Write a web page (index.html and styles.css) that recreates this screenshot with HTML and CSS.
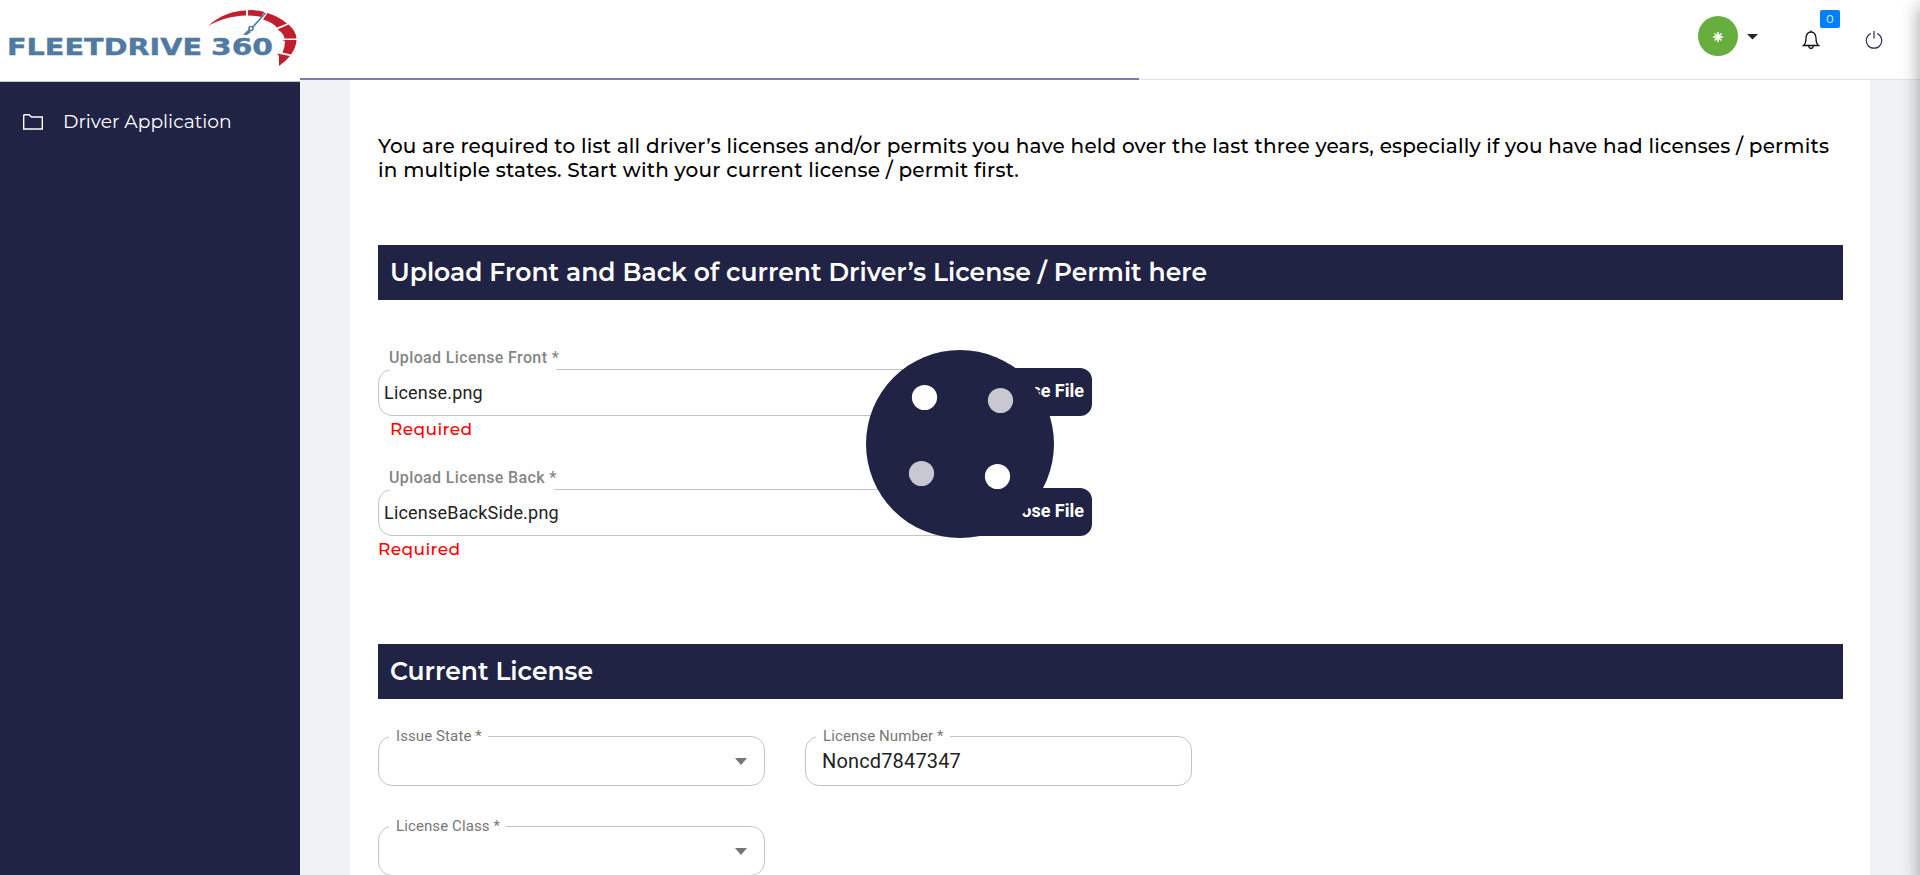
FILE: index.html
```html
<!DOCTYPE html>
<html lang="en">
<head>
<meta charset="utf-8">
<title>FleetDrive 360 - Driver Application</title>
<link rel="stylesheet" href="styles.css">
</head>
<body>
<div class="app">
  <header class="header">
    <svg class="logo" width="300" height="81" viewBox="0 0 300 81">
      <text class="logo-text" x="7" y="54.500" textLength="195" lengthAdjust="spacingAndGlyphs">FLEETDRIVE</text>
      <text class="logo-text" x="211" y="54.500" textLength="62" lengthAdjust="spacingAndGlyphs">360</text>
      <path fill="#c11f2e" d="M208 26C220 15 234 10.500 246 10.500V15.500C232 16 219 19.500 208 26Z"/>
      <path fill="#c11f2e" d="M248 10.200Q257 9.700 264.500 12L261 17Q255 15.500 248 15.500Z"/>
      <path fill="#c11f2e" d="M267.500 13Q279 16.500 287 23.500L277 27.500Q272 22 263 19.500Z"/>
      <path fill="#c11f2e" d="M288.500 24.500Q296 31 296.500 38.500H284.500Q284 33.500 277.500 29.500Z"/>
      <path fill="#c11f2e" d="M296.500 40Q296 48 291 54.500L282.500 52.500Q285 47 285 41L282 40Z"/>
      <path fill="#c11f2e" d="M290 56Q286 61 279 66V56L277 53.500Z"/>
      <path fill="none" stroke="#517aa3" stroke-width="1.600" d="M265.500 13L252 28"/>
      <path fill="#517aa3" d="M243 34.800L248.500 29.500L251 32L247 35Z"/>
      <circle cx="251" cy="28.500" r="2" fill="#fff" stroke="#517aa3" stroke-width="1.600"/>
    </svg>
    <div class="tools">
      <span class="avatar"><svg width="10" height="10" viewBox="-5 -5 10 10"><path stroke="#fff" stroke-width="1.500" d="M0-5V5M-5 0H5M-3.500-3.500L3.500 3.500M3.500-3.500L-3.500 3.500"/><circle r="2.500" fill="#fff"/></svg></span>
      <svg class="caret" width="11" height="6" viewBox="0 0 11 6"><path d="M0 0H11L5.500 5.500Z" fill="#212529"/></svg>
      <span class="bell">
        <svg width="18" height="20" viewBox="0 0 18 20" fill="none" stroke="#111" stroke-width="1.300"><path d="M1.500 15.500H16.500Q14 13.500 14 8Q13.500 2 9 2Q4.500 2 4 8Q4 13.500 1.500 15.500ZM6.500 15.500Q7 18.500 9 18.500Q11 18.500 11.500 15.500M9 .5V2"/></svg>
        <span class="badge">0</span>
      </span>
      <svg class="power" width="18" height="20" viewBox="0 0 18 20" fill="none" stroke="#2b2c63" stroke-width="1.200"><path d="M5.800 3.500A7.700 7.700 0 1 0 12.200 3.500M9 1V8.500"/></svg>
    </div>
  </header>
  <div class="progress"></div>
  <div class="body">
    <nav class="sidebar">
      <a class="nav-item"><svg width="20" height="16" viewBox="0 0 20 16" fill="none" stroke="#fff" stroke-width="1.400"><path d="M.7 1.500Q.7.700 1.500.700H6L8.500 3H19.300V15H.7Z"/></svg><span class="nav-text">Driver Application</span></a>
    </nav>
    <main class="main">
      <section class="card">
        <p class="intro">You are required to list all driver’s licenses and/or permits you have held over the last three years, especially if you have had licenses / permits<br>in multiple states. Start with your current license / permit first.</p>
        <h2 class="bar">Upload Front and Back of current Driver’s License / Permit here</h2>
        <div class="uploads">
          <div class="upload">
            <label class="upload-label">Upload License Front *</label>
            <div class="file"><i class="notch"></i><span class="file-name">License.png</span><button class="choose">Choose File</button></div>
            <span class="required indent">Required</span>
          </div>
          <div class="upload">
            <label class="upload-label">Upload License Back *</label>
            <div class="file"><i class="notch notch-back"></i><span class="file-name">LicenseBackSide.png</span><button class="choose">Choose File</button></div>
            <span class="required">Required</span>
          </div>
        </div>
        <h2 class="bar">Current License</h2>
        <div class="fields">
          <div class="field"><span class="label">Issue State *</span><i class="arrow"></i></div>
          <div class="field"><span class="label">License Number *</span><span class="value">Noncd7847347</span></div>
          <div class="field"><span class="label">License Class *</span><i class="arrow"></i></div>
        </div>
      </section>
    </main>
  </div>
  <div class="drawer-edge"></div>
  <svg class="loader" width="188" height="188" viewBox="0 0 188 188"><circle cx="94" cy="94" r="94" fill="#212344"/><circle cx="58.500" cy="47.500" r="12.600" fill="#fff"/><circle cx="134.500" cy="50.500" r="12.600" fill="#c8c8d0"/><circle cx="55.500" cy="123.500" r="12.600" fill="#c8c8d0"/><circle cx="131.500" cy="126.500" r="12.600" fill="#fff"/></svg>
</div>
</body>
</html>
```
FILE: styles.css
```css
* { box-sizing: border-box; }
body { margin: 0; overflow: hidden; font-family: Montserrat, Inter, sans-serif; }
.app { position: relative; width: 1920px; height: 875px; overflow: hidden; display: flex; flex-direction: column; background: #fff; }
.header { height: 78px; flex: none; display: flex; justify-content: space-between; }
.logo { flex: none; overflow: visible; }
.logo-text { font: 700 23px "DejaVu Sans", sans-serif; fill: #517aa3; stroke: #517aa3; stroke-width: 0.4px; }
.tools { display: flex; align-items: flex-start; padding: 16px 37px 0 0; }
.avatar { width: 40px; height: 40px; border-radius: 50%; background: #68ae3f; display: flex; align-items: center; justify-content: center; padding-top: 2px; }
.caret { margin: 18px 44px 0 9px; }
.bell { position: relative; width: 18px; margin-top: 14px; }
.badge { position: absolute; left: 18px; top: -20px; width: 20px; height: 18px; border-radius: 2px; background: #0080ff; color: #fff; font-size: 11px; line-height: 18px; text-align: center; }
.power { margin: 14px 0 0 45px; }
.progress { height: 2px; flex: none; margin-left: 300px; background: linear-gradient(#7b7aae, #7b7aae) 0 0 / 839px 2px no-repeat, linear-gradient(#dee2e6, #dee2e6) 0 1px / 100% 1px no-repeat; }
.body { flex: 1; display: flex; min-height: 0; }
.sidebar { width: 300px; margin-top: 1px; flex: none; background: #212344; border-top: 1px solid #c6c7d2; padding: 31px 23px; }
.nav-item { display: flex; align-items: center; gap: 20px; color: #fff; height: 17px; }
.nav-text { font-size: 18.7px; line-height: 20px; white-space: nowrap; margin-top: 1px; }
.main { flex: 1; background: #eff3f6; padding: 0 50px; }
.card { width: 1520px; height: 100%; background: #fff; padding: 54px 27px 0 28px; }
.intro { margin: 0; height: 111px; font-size: 20px; line-height: 24px; font-weight: 500; color: #000; white-space: nowrap; letter-spacing: 0.19px; }
.bar { margin: 0; height: 55px; padding: 0 12px; background: #212344; color: #fff; font-size: 25px; line-height: 55px; font-weight: 600; white-space: nowrap; }
.uploads { height: 344px; padding-top: 46px; }
.upload { height: 120px; }
.upload-label { display: block; height: 23px; padding-left: 11px; font: 500 16px/24px Roboto, sans-serif; letter-spacing: 0.37px; color: #858585; }
.file { position: relative; width: 714px; height: 47px; border: 1px solid #c4c4c4; border-radius: 14px; display: flex; align-items: center; justify-content: space-between; padding-left: 5px; }
.notch { position: absolute; left: 10px; top: -1px; height: 1px; background: #fff; width: 167px; }
.notch-back { width: 165px; }
.file-name { font: 400 18px/20px Roboto, sans-serif; color: #222; letter-spacing: 0.2px; }
.choose { margin: -2px -1px -1px; width: 130px; height: 48px; border: 0; border-radius: 0 12px 12px 0; padding: 0 8px 3px 0; background: #212344; color: #fff; text-align: right; font: 700 18px Roboto, sans-serif; }
.required { display: block; color: #f00; font-size: 17px; line-height: 26px; font-weight: 500; letter-spacing: 0.4px; }
.indent { padding-left: 12px; }
.fields { display: grid; grid-template-columns: 387px 387px; column-gap: 40px; row-gap: 40px; padding-top: 37px; }
.field { position: relative; height: 50px; border: 1px solid #c4c4c4; border-radius: 14px; display: flex; align-items: center; padding: 0 17px 0 16px; }
.label { position: absolute; left: 10px; top: -10px; padding: 0 6px 0 7px; background: #fff; font: 400 15px/18px Roboto, sans-serif; letter-spacing: 0.1px; color: #777; white-space: nowrap; }
.value { font: 400 20px/24px Roboto, sans-serif; letter-spacing: 0.15px; color: #222; }
.arrow { margin-left: auto; border: 6.5px solid transparent; border-top: 7px solid #757575; border-bottom: 0; }
.drawer-edge { position: absolute; left: 1920px; top: 0; width: 20px; height: 875px; box-shadow: 0 8px 17px 2px rgba(0,0,0,.32); }
.loader { position: absolute; left: 866px; top: 350px; }
```
